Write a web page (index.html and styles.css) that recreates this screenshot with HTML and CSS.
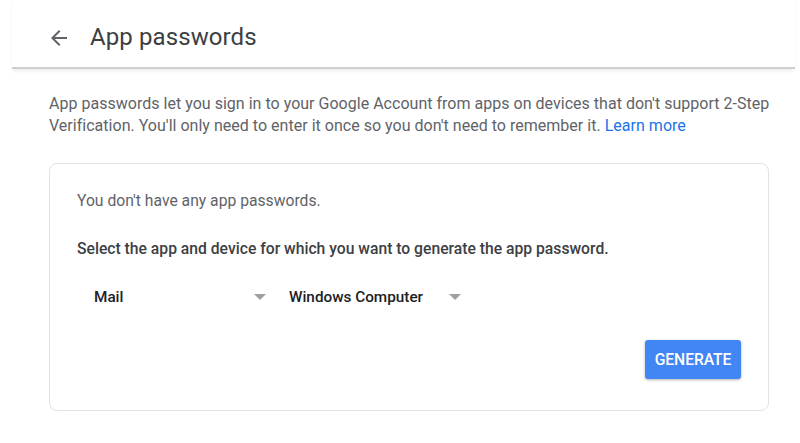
FILE: index.html
```html
<!DOCTYPE html>
<html>
<head>
<meta charset="utf-8">
<link rel="stylesheet" href="styles.css">
</head>
<body>
<header class="topbar">
  <svg class="back" width="24" height="24" viewBox="0 0 24 24"><path d="M20 11H7.83l5.59-5.59L12 4l-8 8 8 8 1.41-1.41L7.83 13H20v-2z" fill="#5f6368"/></svg>
  <h1 class="title">App passwords</h1>
</header>
<main class="content">
  <p class="intro">App passwords let you sign in to your Google Account from apps on devices that don't support 2-Step Verification. You'll only need to enter it once so you don't need to remember it. <a class="link" href="#">Learn more</a></p>
  <section class="card">
    <p class="none">You don't have any app passwords.</p>
    <p class="select">Select the app and device for which you want to generate the app password.</p>
    <div class="selects">
      <div class="dropdown app"><span>Mail</span><span class="caret"></span></div>
      <div class="dropdown device"><span>Windows Computer</span><span class="caret"></span></div>
    </div>
    <div class="actions"><button class="generate">GENERATE</button></div>
  </section>
</main>
</body>
</html>
```
FILE: styles.css
```css
* { box-sizing: border-box; }
body {
  margin: 0;
  background: #fff;
  font-family: Roboto, "Liberation Sans", sans-serif;
  width: 800px;
  height: 443px;
  overflow: hidden;
}
.topbar {
  margin: 0 5px 0 12px;
  height: 69px;
  display: flex;
  align-items: center;
  padding: 0 0 0 35px;
  border-bottom: 2px solid #cfcfcf;
  box-shadow: 0 3px 4px -1px rgba(0,0,0,0.08);
}
.back { margin-top: 8px; flex: none; }
.title {
  margin: 6px 0 0 19px;
  font-size: 24px;
  font-weight: 400;
  color: #3c4043;
  letter-spacing: 0.1px;
}
.content { padding: 0 10px 0 49px; }
.intro {
  margin: 24px 0 0;
  font-size: 16px;
  line-height: 22px;
  color: #5f6368;
  letter-spacing: 0.02px;
  width: 745px;
}
.link { color: #1a73e8; text-decoration: none; }
.card {
  margin-top: 26px;
  width: 720px;
  height: 248px;
  border: 1px solid #e3e3e3;
  border-radius: 8px;
  padding: 27px 27px 0 27px;
}
.none {
  margin: 0;
  font-size: 15.7px;
  line-height: 20px;
  color: #5f6368;
}
.select {
  margin: 28px 0 0;
  font-size: 15.7px;
  line-height: 20px;
  color: #3c4043;
  font-weight: 500;
}
.selects {
  display: flex;
  margin-top: 28px;
  height: 20px;
  align-items: center;
}
.dropdown {
  display: flex;
  align-items: center;
  justify-content: space-between;
  font-size: 15.3px;
  font-weight: 500;
  color: #202124;
}
.app { width: 189px; padding-left: 17px; }
.device { width: 172px; margin-left: 23px; }
.caret {
  width: 0; height: 0;
  border-left: 6px solid transparent;
  border-right: 6px solid transparent;
  border-top: 6px solid #a0a0a0;
}
.actions {
  display: flex;
  justify-content: flex-end;
  margin-top: 33px;
}
.generate {
  width: 96px;
  height: 39px;
  background: #4285f4;
  color: #fff;
  border: none;
  border-radius: 3px;
  font-family: Roboto, "Liberation Sans", sans-serif;
  font-size: 15.7px;
  font-weight: 500;
  letter-spacing: -0.1px;
  box-shadow: 0 1px 3px rgba(0,0,0,0.3);
  padding: 0;
}
```
